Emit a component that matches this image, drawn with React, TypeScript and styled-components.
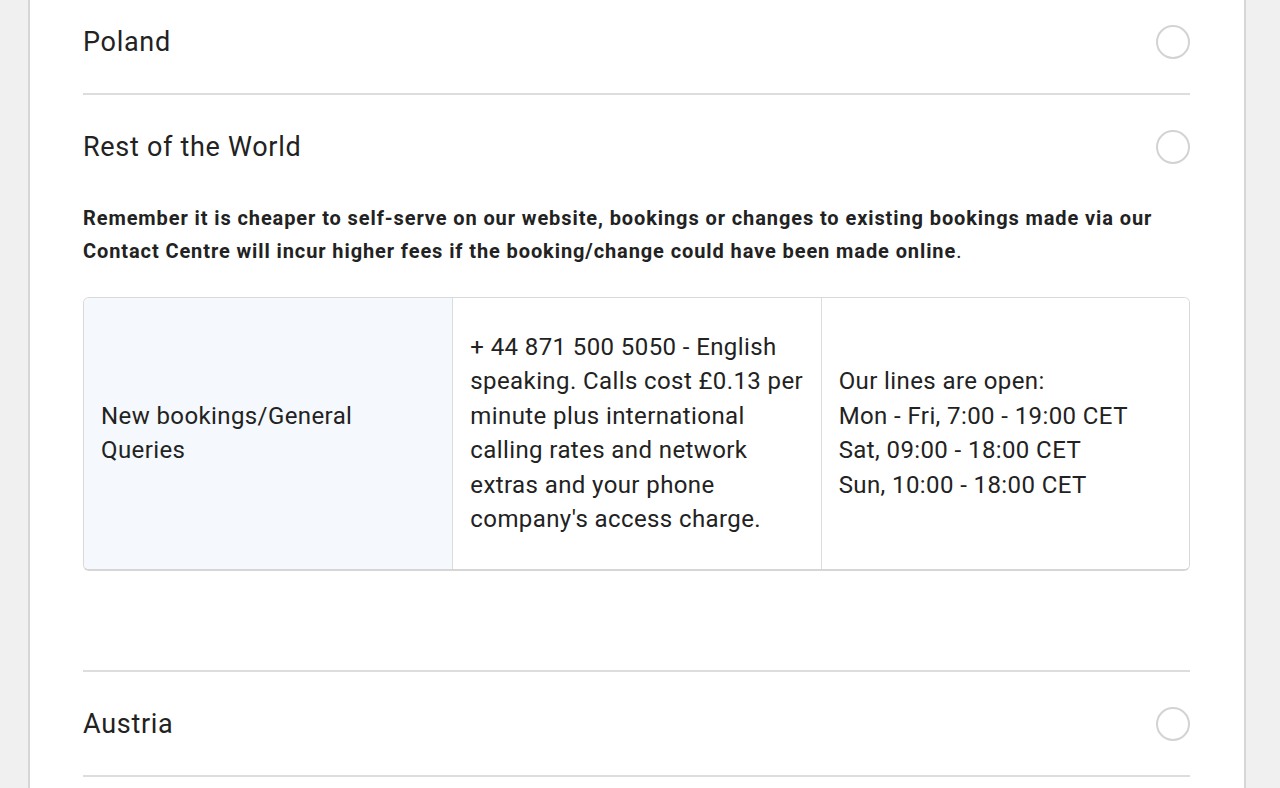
import styled, { createGlobalStyle } from "styled-components";

const GlobalStyle = createGlobalStyle`
    html, body {
        margin: 0;
        padding: 0;
        background: #f0f0f0;
        font-family: Roboto, "Liberation Sans", Arial, sans-serif;
        color: #222222;
        overflow: hidden;
    }
`

type Country = { name: string; open?: boolean };

const countries: Country[] = [
    { name: "Poland" },
    { name: "Rest of the World", open: true },
    { name: "Austria" },
];

function App() {
    return (
        <>
            <GlobalStyle />
            <Page>
                <Panel>
                    {countries.map((c, i) => (
                        <Section key={c.name} $first={i === 0}>
                            <Header>
                                <Title>{c.name}</Title>
                                <Radio />
                            </Header>
                            {c.open && (
                                <Body>
                                    <Notice>
                                        <strong>
                                            Remember it is cheaper to self-serve on our website, bookings or changes to existing bookings made via our Contact Centre will incur higher fees if the booking/change could have been made online
                                        </strong>
                                        .
                                    </Notice>
                                    <ContactTable>
                                        <Cell $head>New bookings/General Queries</Cell>
                                        <Cell>
                                            + 44 871 500 5050 - English speaking. Calls cost £0.13 per minute plus international calling rates and network extras and your phone company's access charge.
                                        </Cell>
                                        <Cell>
                                            Our lines are open:
                                            <br />
                                            Mon - Fri, 7:00 - 19:00 CET
                                            <br />
                                            Sat, 09:00 - 18:00 CET
                                            <br />
                                            Sun, 10:00 - 18:00 CET
                                        </Cell>
                                    </ContactTable>
                                </Body>
                            )}
                        </Section>
                    ))}
                </Panel>
            </Page>
        </>
    )
}

const Page = styled.div`
    display: flex;
    justify-content: flex-start;
    padding-left: 28px;
    margin-top: -10px;
`

const Panel = styled.div`
    width: 1218px;
    min-height: 820px;
    box-sizing: border-box;
    background: #ffffff;
    border-left: 2px solid #d6d6d6;
    border-right: 2px solid #d6d6d6;
    padding: 0 54px 0 53px;
`

const Section = styled.div<{ $first?: boolean }>`
    border-top: ${(p) => (p.$first ? "none" : "2px solid #dddddd")};

    &:last-child {
        border-bottom: 2px solid #dddddd;
    }
`

const Header = styled.div`
    display: flex;
    align-items: center;
    justify-content: space-between;
    height: 103px;
`

const Title = styled.div`
    font-size: 27px;
    font-weight: 400;
    letter-spacing: 0.7px;
`

const Radio = styled.span`
    display: block;
    width: 30px;
    height: 30px;
    border: 2px solid #d3d3d3;
    border-radius: 50%;
`

const Body = styled.div`
    padding: 4px 0 99px;
`

const Notice = styled.p`
    margin: 0 0 29px;
    font-size: 20px;
    line-height: 33px;
    letter-spacing: 0.9px;

    strong {
        font-weight: 700;
    }
`

const ContactTable = styled.div`
    display: grid;
    grid-template-columns: 1fr 1fr 1fr;
    border: 1px solid #d9d9d9;
    border-bottom: 2px solid #d6d6d6;
    border-radius: 6px;
    overflow: hidden;
`

const Cell = styled.div<{ $head?: boolean }>`
    display: flex;
    align-items: center;
    padding: 32px 16px 33px 17px;
    font-size: 24px;
    line-height: 34.4px;
    letter-spacing: 0.4px;
    background: ${(p) => (p.$head ? "#f5f8fc" : "#ffffff")};
    border-left: 1px solid #dddddd;

    &:first-child {
        border-left: none;
    }
`

export default App;
